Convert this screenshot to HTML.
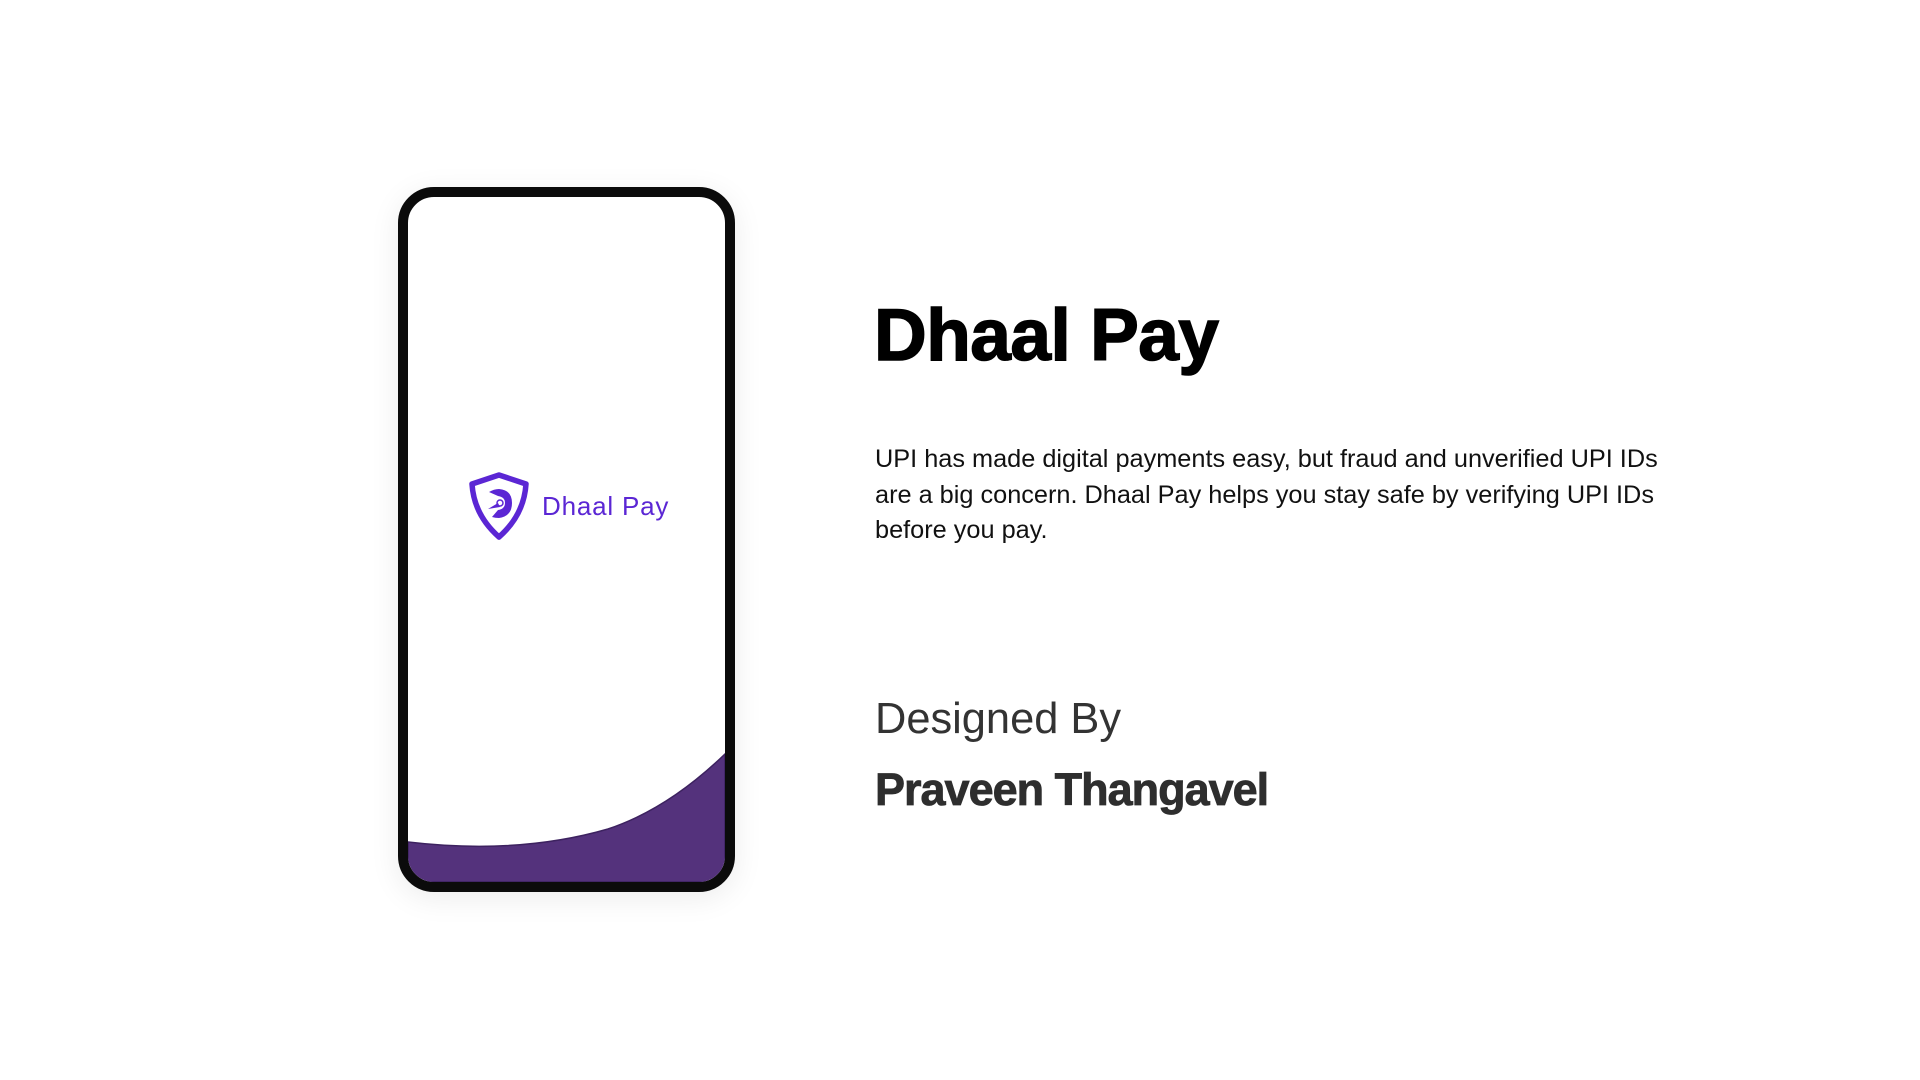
<!DOCTYPE html>
<html><head><meta charset="utf-8"><style>
html,body{margin:0;padding:0;width:1920px;height:1080px;background:#fff;overflow:hidden;font-family:"Liberation Sans",sans-serif}
.phone{position:absolute;left:398px;top:187px;width:337px;height:705px;box-sizing:border-box;border:10px solid #0b0b0b;border-radius:36px;background:#fff;overflow:hidden;box-shadow:0 6px 30px rgba(0,0,0,0.08)}
.t{position:absolute;white-space:nowrap}
</style></head><body>
<div class="phone">
<svg width="317" height="685" style="position:absolute;left:0;top:0">
<path d="M0 645 Q110 658 200 632 Q260 612 317 557 L317 685 L0 685 Z" fill="#54327c" stroke="#3d2260" stroke-width="1.5"/>
<g transform="translate(62,276)">
<path d="M29 2 L56 11 Q54 42 29 64 Q4 42 2 11 Z" fill="none" stroke="#5b26d4" stroke-width="5.5" stroke-linejoin="round"/>
<path d="M19 19 Q24 16 29 16 Q42 17 42 30 Q42 43 29 45 Q25 45 22 44 L28 37 Q35 36 35 30 Q35 24 28 23 Z" fill="#5b26d4"/>
<path d="M18 36 L30 34 L28 30 Z" fill="#5b26d4"/>
<circle cx="30" cy="30" r="3" fill="none" stroke="#5b26d4" stroke-width="1.5"/>
</g>
<text x="134" y="318" font-family="Liberation Sans, sans-serif" font-size="26" fill="#5b26d4" letter-spacing="0.8">Dhaal Pay</text>
</svg>
</div>
<div class="t" style="left:874px;top:296px;font-size:73px;font-weight:bold;color:#000;letter-spacing:-0.5px;line-height:80px;-webkit-text-stroke:1.5px #000">Dhaal Pay</div>
<div class="t" style="left:875px;top:442px;font-size:25.3px;line-height:35.5px;color:#111">UPI has made digital payments easy, but fraud and unverified UPI IDs<br>are a big concern. Dhaal Pay helps you stay safe by verifying UPI IDs<br>before you pay.</div>
<div class="t" style="left:875px;top:694px;font-size:43.4px;line-height:50px;color:#333">Designed By</div>
<div class="t" style="left:875px;top:763px;font-size:45px;font-weight:bold;line-height:54px;color:#2e2e2e;letter-spacing:-1px;-webkit-text-stroke:0.8px #2e2e2e">Praveen Thangavel</div>
</body></html>
